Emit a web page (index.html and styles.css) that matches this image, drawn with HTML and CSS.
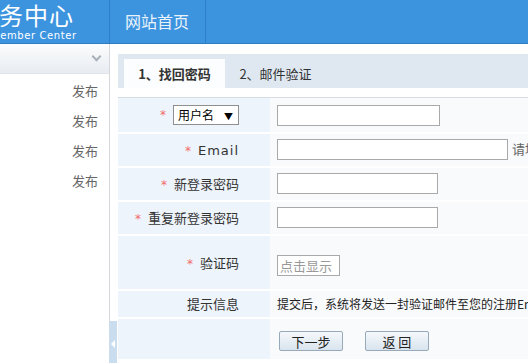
FILE: index.html
```html
<!DOCTYPE html>
<html lang="zh-CN">
<head>
  <meta charset="UTF-8">
  <title>找回密码 - 商务中心</title>
  <link rel="stylesheet" href="styles.css">
</head>
<body>
  <div class="header">
    <div class="logo">
      <div class="logo-cn">商务中心</div>
      <div class="logo-en">Member Center</div>
    </div>
    <div class="nav">
      <a class="nav-item" href="#">网站首页</a>
    </div>
  </div>

  <div class="layout">
    <!-- 左侧菜单 -->
    <div class="sidebar">
      <div class="side-top"><span class="chevron"></span></div>
      <ul class="side-menu">
        <li>发布</li>
        <li>发布</li>
        <li>发布</li>
        <li>发布</li>
      </ul>
      <div class="side-toggle"><span class="arrow"></span></div>
    </div>

    <!-- 主体 -->
    <div class="main">
      <div class="tabs">
        <div class="tab active">1、找回密码</div>
        <div class="tab">2、邮件验证</div>
      </div>

      <table class="form">
        <tr class="r1">
          <td class="label"><span class="star">*</span> <span class="fake-select">用户名<i>▼</i></span></td>
          <td class="value"><input type="text" class="inp"></td>
        </tr>
        <tr class="r2">
          <td class="label"><span class="star">*</span> <span class="en">Email</span></td>
          <td class="value"><input type="text" class="inp wide"> <span class="tip">请填写您注册时的Email</span></td>
        </tr>
        <tr class="r3">
          <td class="label"><span class="star">*</span> 新登录密码</td>
          <td class="value"><input type="password" class="inp mid"></td>
        </tr>
        <tr class="r4">
          <td class="label"><span class="star">*</span> 重复新登录密码</td>
          <td class="value"><input type="password" class="inp mid"></td>
        </tr>
        <tr class="r5">
          <td class="label"><span class="star">*</span> 验证码</td>
          <td class="value"><input type="text" class="inp code" placeholder="点击显示"></td>
        </tr>
        <tr class="r6">
          <td class="label">提示信息</td>
          <td class="value notice">提交后，系统将发送一封验证邮件至您的注册Email</td>
        </tr>
        <tr class="r7">
          <td class="label"></td>
          <td class="value">
            <button class="btn">下一步</button>
            <button class="btn">返 回</button>
          </td>
        </tr>
      </table>
    </div>
  </div>
</body>
</html>
```

FILE: styles.css
```css
* {
  margin: 0;
  padding: 0;
  box-sizing: border-box;
}

body {
  font-family: "Noto Sans CJK SC", "DejaVu Sans", sans-serif;
  font-size: 13px;
  color: #333;
  background: #fff;
  width: 528px;
  height: 363px;
  overflow: hidden;
}

/* 头部 */
.header {
  display: flex;
  height: 44px;
  background: #3c94df;
  border-bottom: 1px solid #2f7cc2;
}

.logo {
  width: 109px;
  overflow: hidden;
  color: #fff;
  white-space: nowrap;
}

.logo-cn {
  margin-left: -26px;
  margin-top: 2px;
  font-size: 24px;
  line-height: 26px;
  letter-spacing: 1px;
}

.logo-en {
  margin-left: -9px;
  margin-top: 2px;
  font-family: "DejaVu Sans", sans-serif;
  font-size: 10px;
  letter-spacing: 0.6px;
  line-height: 12px;
}

.nav {
  display: flex;
  border-left: 1px solid #2f7fc8;
}

.nav-item {
  display: block;
  width: 96px;
  padding-left: 15px;
  line-height: 42px;
  font-size: 16px;
  color: #eaf3fc;
  text-decoration: none;
  border-right: 1px solid #2f7fc8;
}

/* 布局 */
.layout {
  display: flex;
  height: 319px;
  position: relative;
}

.sidebar {
  width: 110px;
  flex-shrink: 0;
  border-right: 1px solid #d4d8dd;
  background: #fff;
}

.side-top {
  height: 30px;
  background: linear-gradient(#fbfcfd, #e8ecf1);
  border-bottom: 1px solid #e0e4e9;
  display: flex;
  justify-content: flex-end;
  align-items: center;
  padding-right: 9px;
}

.chevron {
  width: 7px;
  height: 7px;
  border-right: 2px solid #a8b0ba;
  border-bottom: 2px solid #a8b0ba;
  transform: rotate(45deg);
  margin-top: -4px;
}

.side-menu {
  list-style: none;
  padding-top: 2px;
}

.side-menu li {
  height: 30px;
  line-height: 30px;
  text-align: right;
  padding-right: 11px;
  color: #666;
}

.side-toggle {
  position: absolute;
  left: 109px;
  top: 277px;
  width: 8px;
  height: 42px;
  background: #c9ddef;
  display: flex;
  align-items: center;
  justify-content: center;
}

.arrow {
  width: 0;
  height: 0;
  border-top: 4px solid transparent;
  border-bottom: 4px solid transparent;
  border-right: 4px solid #fff;
  margin-top: 4px;
}

/* 主体 */
.main {
  flex: 1;
  min-width: 0;
  overflow: hidden;
  padding-left: 8px;
  padding-top: 10px;
}

.tabs {
  display: flex;
  height: 34px;
  background: #dfe8f1;
  padding-left: 6px;
  padding-top: 5px;
}

.tab {
  width: 101px;
  height: 29px;
  line-height: 29px;
  text-align: center;
  color: #333;
}

.tab.active {
  background: #fcfdfe;
  font-weight: bold;
}

.form {
  margin-top: 9px;
  border-collapse: collapse;
  border-top: 1px solid #d6dce3;
  table-layout: fixed;
  width: 520px;
}

.form td {
  border-bottom: 2px solid #fff;
  white-space: nowrap;
  overflow: visible;
}

.form .label {
  width: 152px;
  background: #eef4fb;
  text-align: right;
  padding-right: 31px;
}

.form .value {
  background: #f9fafc;
  padding-left: 7px;
}

.form .notice {
  font-size: 12px;
  color: #222;
}

.r1 td { height: 35px; }
.r2 td, .r3 td, .r4 td { height: 34px; }
.r5 td { height: 55px; }
.r6 td { height: 28px; }
.r7 td { height: 42px; }

.star {
  color: #f26a6a;
  font-family: "DejaVu Sans", sans-serif;
  font-size: 12px;
  margin-right: 4px;
}

.en {
  font-family: "DejaVu Sans", sans-serif;
  letter-spacing: 1px;
}

.fake-select {
  display: inline-block;
  width: 66px;
  height: 20px;
  line-height: 18px;
  border: 1px solid #8f8f8f;
  background: #fff;
  text-align: left;
  padding-left: 4px;
  font-size: 12px;
  vertical-align: middle;
  color: #000;
}

.fake-select i {
  font-style: normal;
  font-size: 9px;
  margin-left: 10px;
}

.inp {
  height: 21px;
  width: 163px;
  border: 1px solid #a9a9a9;
  background: #fff;
  vertical-align: middle;
  font-family: inherit;
  font-size: 13px;
  padding-left: 2px;
}

.inp.wide {
  width: 231px;
}

.inp.mid {
  width: 161px;
}

.inp.code {
  width: 63px;
  margin-top: 6px;
}

.inp::placeholder {
  color: #999;
}

.tip {
  color: #666;
  margin-left: 1px;
}

.btn {
  width: 64px;
  height: 20px;
  border: 1px solid #97a9ba;
  border-radius: 2px;
  background: linear-gradient(#f5f8fb, #d9e4ee);
  font-family: inherit;
  font-size: 13px;
  color: #222;
  margin-left: 2px;
  margin-right: 17px;
  margin-top: 4px;
  cursor: pointer;
}
```
